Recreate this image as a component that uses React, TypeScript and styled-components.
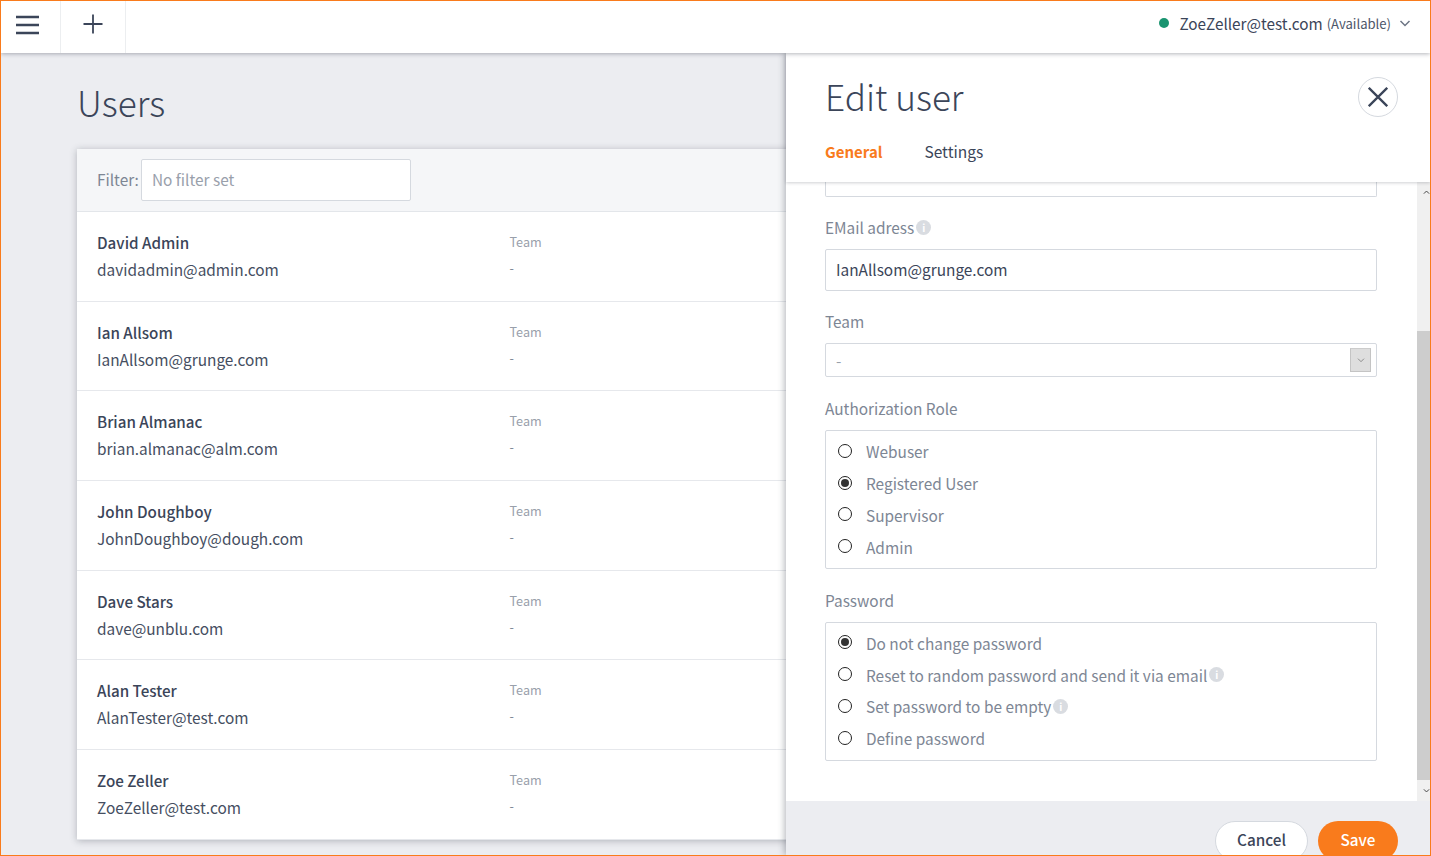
import React from "react";
import styled, { createGlobalStyle } from "styled-components";

const FONT = `"Noto Sans CJK SC", "Noto Sans", sans-serif`;

const Global = createGlobalStyle`
  html, body { margin: 0; padding: 0; height: 100%; overflow: hidden; }
  * { box-sizing: border-box; }
  body { font-family: ${FONT}; color: #3b4559; }
`;

const Frame = styled.div`
  width: 1431px; height: 856px; display: flex; flex-direction: column;
  border: 1px solid #f97b1c; background: #ecedf1; overflow: hidden; position: relative;
`;
const TopBar = styled.header`
  height: 52px; flex: none; background: #fff; display: flex; align-items: stretch;
  box-shadow: 0 1px 4px rgba(40, 45, 60, .35); position: relative; z-index: 5;
`;
const BarButton = styled.div<{ $w: number }>`
  width: ${p => p.$w}px; display: flex; align-items: center; justify-content: center;
  border-right: 1px solid #eceef0; color: #3b4559;
`;
const UserBox = styled.div`
  margin-left: auto; display: flex; align-items: center; padding-right: 19px; padding-bottom: 8px;
`;
const Dot = styled.span`
  width: 10px; height: 10px; border-radius: 50%; background: #1a9470; margin-right: 10px;
`;
const UserMail = styled.span`
  font-size: 15.3px; color: #3b4559;
`;
const UserState = styled.span`
  font-size: 13.1px; color: #4d5669; margin-left: 4px; margin-right: 8px;
`;
const Content = styled.div`flex: 1; display: flex; min-height: 0;`;
const ListSide = styled.main`
  width: 785px; flex: none; overflow: hidden; padding-left: 76px;
`;
const PageTitle = styled.h1`
  margin: 0; padding-top: 25px; height: 96px; font-size: 35.2px; font-weight: 200; line-height: 48px; color: #3b4559;
`;
const Card = styled.section`
  width: 900px; background: #fff; box-shadow: 0 1px 7px rgba(40, 45, 60, .3);
`;
const FilterRow = styled.div`
  height: 63px; background: #f5f6f8; border-bottom: 1px solid #e3e6ea;
  display: flex; align-items: center; padding-left: 20px; gap: 2px;
`;
const FilterLabel = styled.span`font-size: 15.4px; color: #7d8694; padding-bottom: 2px;`;
const FilterInput = styled.div`
  width: 270px; height: 42px; background: #fff; border: 1px solid #d5d9df; border-radius: 2px;
  padding: 0 0 2px 10px; display: flex; align-items: center; font-size: 15.4px; color: #99a0ab;
`;
const UserRow = styled.div`
  height: 89.7px; border-bottom: 1px solid #e6e8ec; display: flex; padding: 18px 0 0 20px;
`;
const UserMain = styled.div`width: 412.5px;`;
const UserName = styled.div`font-size: 15.2px; font-weight: 500; line-height: 24px; color: #3b4559;`;
const UserEmail = styled.div`font-size: 15.4px; line-height: 24px; margin-top: 3px; color: #454e61;`;
const TeamCol = styled.div`padding-top: 1px;`;
const TeamLabel = styled.div`font-size: 12.6px; line-height: 22px; color: #99a0ab;`;
const TeamValue = styled.div`font-size: 12.6px; line-height: 22px; margin-top: 4px; color: #7d8694;`;

const Panel = styled.aside`
  flex: 1; display: flex; flex-direction: column; position: relative; z-index: 3;
  box-shadow: -2px 0 6px rgba(40, 45, 60, .3);
`;
const PanelHead = styled.div`
  height: 129px; flex: none; background: #fff; padding: 15px 0 0 39px; position: relative; z-index: 2;
  box-shadow: 0 1px 3px rgba(40, 45, 60, .22);
`;
const PanelTitle = styled.h2`
  margin: 0; font-size: 35.2px; font-weight: 200; line-height: 56px; color: #3b4559;
`;
const CloseBtn = styled.div`
  position: absolute; right: 32px; top: 24px; width: 40px; height: 40px; border-radius: 50%;
  border: 1px solid #d5d9df; display: flex; align-items: center; justify-content: center; background: #fff;
`;
const Tabs = styled.div`display: flex; gap: 42px; margin-top: 16px;`;
const Tab = styled.span<{ $active?: boolean }>`
  font-size: ${p => p.$active ? 15 : 15.5}px; line-height: 24px; font-weight: ${p => p.$active ? 700 : 400};
  height: 24px; margin-top: ${p => p.$active ? 0 : -1}px;
  color: ${p => p.$active ? "#f97b1c" : "#3b4559"};
`;
const PanelBody = styled.div`
  flex: none; height: 619px; background: #fff; display: flex; overflow: hidden;
`;
const Form = styled.div`flex: 1; padding: 0 40px 0 39px; overflow: hidden;`;
const Stub = styled.div`
  height: 15px; background: #fff; border: 1px solid #d5d9df; border-top: 0; border-radius: 0 0 2px 2px;
`;
const Label = styled.div<{ $mt: number }>`
  margin-top: ${p => p.$mt}px; height: 22px; padding-bottom: 2px; font-size: 15.4px; line-height: 20px; color: #7d8694;
  display: flex; align-items: center;
`;
const InfoDot = styled.span`
  width: 15px; height: 15px; border-radius: 50%; background: #d9dce1; color: #fff;
  font-size: 10px; font-weight: 700; line-height: 15px; text-align: center; margin-left: 2px; flex: none;
`;
const TextBox = styled.div`
  margin-top: 10px; height: 42px; border: 1px solid #d5d9df; border-radius: 2px;
  padding: 0 0 2px 10px; display: flex; align-items: center; font-size: 15.4px; color: #3b4559;
`;
const SelectBox = styled.div`
  margin-top: 10px; height: 34px; border: 1px solid #d5d9df; border-radius: 2px;
  padding: 0 5px 0 10px; display: flex; align-items: center; justify-content: space-between;
  font-size: 15.4px; color: #99a0ab;
`;
const SelectArrow = styled.div`
  width: 21px; height: 24px; background: #dedede; border: 1px solid #c4c4c4; border-top-color: #ccc;
  display: flex; align-items: center; justify-content: center;
`;
const RadioGroup = styled.div`
  margin-top: 10px; height: 139px; border: 1px solid #d5d9df; border-radius: 2px; padding: 5px 0 0 12px;
`;
const RadioRow = styled.div`
  height: 31.8px; display: flex; align-items: center; font-size: 15.4px; color: #7d8694; padding-bottom: 2px;
`;
const Radio = styled.span<{ $on?: boolean }>`
  width: 14px; height: 14px; border-radius: 50%; border: 1.5px solid #222; margin-right: 14px; margin-bottom: 1px;
  flex: none; display: flex; align-items: center; justify-content: center; background: #fff;
  &::after { content: ""; width: 8px; height: 8px; border-radius: 50%; background: ${p => p.$on ? "#333" : "transparent"}; }
`;
const ScrollBar = styled.div`
  width: 13px; flex: none; background: #f0f0f0; display: flex; flex-direction: column;
`;
const ScrollArrow = styled.div<{ $h: number }>`
  height: ${p => p.$h}px; flex: none; display: flex; align-items: center; justify-content: center; padding-left: 6px;
`;
const ScrollGap = styled.div`flex: 1;`;
const ScrollThumb = styled.div`height: 449px; flex: none; background: #cdcdcd;`;
const PanelFoot = styled.div`
  flex: 1; display: flex; justify-content: flex-end; gap: 10px; padding: 20px 32px 0 0; background: #ecedf1; min-height: 0;
`;
const Pill = styled.div<{ $primary?: boolean }>`
  height: 40px; border-radius: 20px; display: flex; align-items: center; justify-content: center; flex: none;
  width: ${p => p.$primary ? 80 : 93}px; font-size: 15.3px; font-weight: 500; padding-bottom: 4px;
  background: ${p => p.$primary ? "#f97b1c" : "#fff"};
  color: ${p => p.$primary ? "#fff" : "#3b4559"};
  border: ${p => p.$primary ? "0" : "1px solid #d5d9df"};
`;

const users = [
  ["David Admin", "davidadmin@admin.com"],
  ["Ian Allsom", "IanAllsom@grunge.com"],
  ["Brian Almanac", "brian.almanac@alm.com"],
  ["John Doughboy", "JohnDoughboy@dough.com"],
  ["Dave Stars", "dave@unblu.com"],
  ["Alan Tester", "AlanTester@test.com"],
  ["Zoe Zeller", "ZoeZeller@test.com"],
];

const Chevron = ({ size, color, up, w = 1.5 }: { size: number; color: string; up?: boolean; w?: number }) => (
  <svg width={size} height={size} viewBox="0 0 12 12" fill="none">
    <path d={up ? "M1.5 8L6 3.5 10.5 8" : "M1.5 4L6 8.5 10.5 4"} stroke={color} strokeWidth={w} />
  </svg>
);

export default function App() {
  return (
    <Frame>
      <Global />
      <TopBar>
        <BarButton $w={60}>
          <svg width="24" height="20" viewBox="0 0 24 20" style={{ marginBottom: 4, marginRight: 6 }}>
            <path d="M0 2h23M0 10h23M0 18h23" stroke="#3b4559" strokeWidth="2.4" />
          </svg>
        </BarButton>
        <BarButton $w={65}>
          <svg width="20" height="20" viewBox="0 0 20 20" style={{ marginBottom: 7 }}>
            <path d="M10 .5v19M.5 10h19" stroke="#3b4559" strokeWidth="1.8" />
          </svg>
        </BarButton>
        <UserBox>
          <Dot />
          <UserMail>ZoeZeller@test.com</UserMail>
          <UserState>(Available)</UserState>
          <Chevron size={12} color="#6d7584" />
        </UserBox>
      </TopBar>
      <Content>
        <ListSide>
          <PageTitle>Users</PageTitle>
          <Card>
            <FilterRow>
              <FilterLabel>Filter:</FilterLabel>
              <FilterInput>No filter set</FilterInput>
            </FilterRow>
            {users.map(([name, mail]) => (
              <UserRow key={name}>
                <UserMain>
                  <UserName>{name}</UserName>
                  <UserEmail>{mail}</UserEmail>
                </UserMain>
                <TeamCol>
                  <TeamLabel>Team</TeamLabel>
                  <TeamValue>-</TeamValue>
                </TeamCol>
              </UserRow>
            ))}
          </Card>
        </ListSide>
        <Panel>
          <PanelHead>
            <PanelTitle>Edit user</PanelTitle>
            <CloseBtn>
              <svg width="20" height="20" viewBox="0 0 20 20">
                <path d="M.8.8l18.4 18.4M19.2.8L.8 19.2" stroke="#3b4559" strokeWidth="2.3" />
              </svg>
            </CloseBtn>
            <Tabs>
              <Tab $active>General</Tab>
              <Tab>Settings</Tab>
            </Tabs>
          </PanelHead>
          <PanelBody>
            <Form>
              <Stub />
              <Label $mt={20}>EMail adress<InfoDot>i</InfoDot></Label>
              <TextBox>IanAllsom@grunge.com</TextBox>
              <Label $mt={20}>Team</Label>
              <SelectBox>
                -
                <SelectArrow><Chevron size={8} color="#777" w={1.2} /></SelectArrow>
              </SelectBox>
              <Label $mt={21.4}>Authorization Role</Label>
              <RadioGroup>
                <RadioRow><Radio />Webuser</RadioRow>
                <RadioRow><Radio $on />Registered User</RadioRow>
                <RadioRow><Radio />Supervisor</RadioRow>
                <RadioRow><Radio />Admin</RadioRow>
              </RadioGroup>
              <Label $mt={20.6}>Password</Label>
              <RadioGroup>
                <RadioRow><Radio $on />Do not change password</RadioRow>
                <RadioRow><Radio />Reset to random password and send it via email<InfoDot>i</InfoDot></RadioRow>
                <RadioRow><Radio />Set password to be empty<InfoDot>i</InfoDot></RadioRow>
                <RadioRow><Radio />Define password</RadioRow>
              </RadioGroup>
            </Form>
            <ScrollBar>
              <ScrollArrow $h={20}><Chevron size={11} color="#444" up w={1.7} /></ScrollArrow>
              <ScrollGap />
              <ScrollThumb />
              <ScrollArrow $h={21}><Chevron size={11} color="#444" w={1.7} /></ScrollArrow>
            </ScrollBar>
          </PanelBody>
          <PanelFoot>
            <Pill>Cancel</Pill>
            <Pill $primary>Save</Pill>
          </PanelFoot>
        </Panel>
      </Content>
    </Frame>
  );
}
